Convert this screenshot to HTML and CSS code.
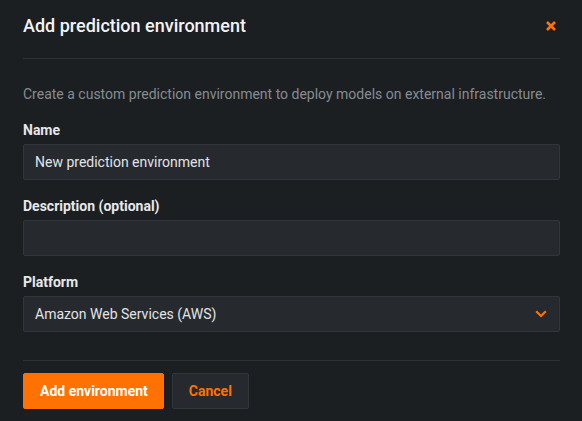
FILE: index.html
```html
<!DOCTYPE html>
<html>
<head>
<meta charset="utf-8">
<link rel="stylesheet" href="styles.css">
</head>
<body>
<div class="dialog">
  <header class="header">
    <h1 class="title">Add prediction environment</h1>
    <button class="close" aria-label="Close">
      <svg width="10" height="10" viewBox="0 0 10 10"><path d="M1 1L9 9M9 1L1 9" stroke="#ff7100" stroke-width="2.6" stroke-linecap="butt"/></svg>
    </button>
  </header>
  <p class="intro">Create a custom prediction environment to deploy models on external infrastructure.</p>
  <div class="field">
    <label class="label">Name</label>
    <div class="input">New prediction environment</div>
  </div>
  <div class="field">
    <label class="label">Description (optional)</label>
    <div class="input"></div>
  </div>
  <div class="field">
    <label class="label">Platform</label>
    <div class="input select">
      <span>Amazon Web Services (AWS)</span>
      <svg width="12" height="8" viewBox="0 0 12 8"><path d="M1.2 1.2L6 6L10.8 1.2" fill="none" stroke="#ff7100" stroke-width="2.2"/></svg>
    </div>
  </div>
  <footer class="footer">
    <button class="btn primary">Add environment</button>
    <button class="btn secondary">Cancel</button>
  </footer>
</div>
</body>
</html>
```
FILE: styles.css
```css
html, body {
  margin: 0;
  padding: 0;
  background: #1b1f22;
}
body {
  font-family: Roboto, "Noto Sans", sans-serif;
  color: #e4e6e8;
  width: 582px;
  height: 421px;
  overflow: hidden;
}
.dialog {
  padding: 0 22px 0 23px;
}
.header {
  height: 59px;
  box-sizing: border-box;
  padding-top: 14px;
  border-bottom: 1px solid #2d3236;
  display: flex;
  justify-content: space-between;
  align-items: flex-start;
}
.title {
  margin: 0;
  font-size: 18px;
  line-height: 24px;
  font-weight: 500;
  color: #f2f3f4;
}
.close {
  background: none;
  border: 0;
  padding: 0;
  margin: 7px 4px 0 0;
  width: 10px;
  height: 10px;
  display: flex;
}
.intro {
  margin: 26px 0 19px;
  font-size: 14px;
  line-height: 18px;
  color: #878c91;
}
.field {
  display: flex;
  flex-direction: column;
  margin-bottom: 18px;
}
.label {
  font-size: 14px;
  line-height: 16px;
  font-weight: 700;
  color: #e6e8ea;
  margin-bottom: 6px;
}
.input {
  height: 36px;
  box-sizing: border-box;
  background: #262a2e;
  border: 1px solid #31363a;
  border-radius: 2px;
  padding: 0 11px;
  font-size: 14px;
  color: #e2e4e6;
  display: flex;
  align-items: center;
}
.select {
  justify-content: space-between;
}
.select svg {
  margin-right: 1px;
}
.footer {
  margin-top: 28px;
  border-top: 1px solid #2d3236;
  padding-top: 12px;
  display: flex;
  gap: 8px;
}
.btn {
  height: 36px;
  font-family: Roboto, "Noto Sans", sans-serif;
  font-size: 14px;
  font-weight: 700;
  border-radius: 2px;
  padding: 0 16px;
  white-space: nowrap;
}
.primary {
  background: #ff7100;
  border: 1px solid #ff7100;
  color: #ffffff;
  padding: 0 15px 0 16px;
}
.secondary {
  background: #262a2e;
  border: 1px solid #31363a;
  color: #ff7100;
}
```
